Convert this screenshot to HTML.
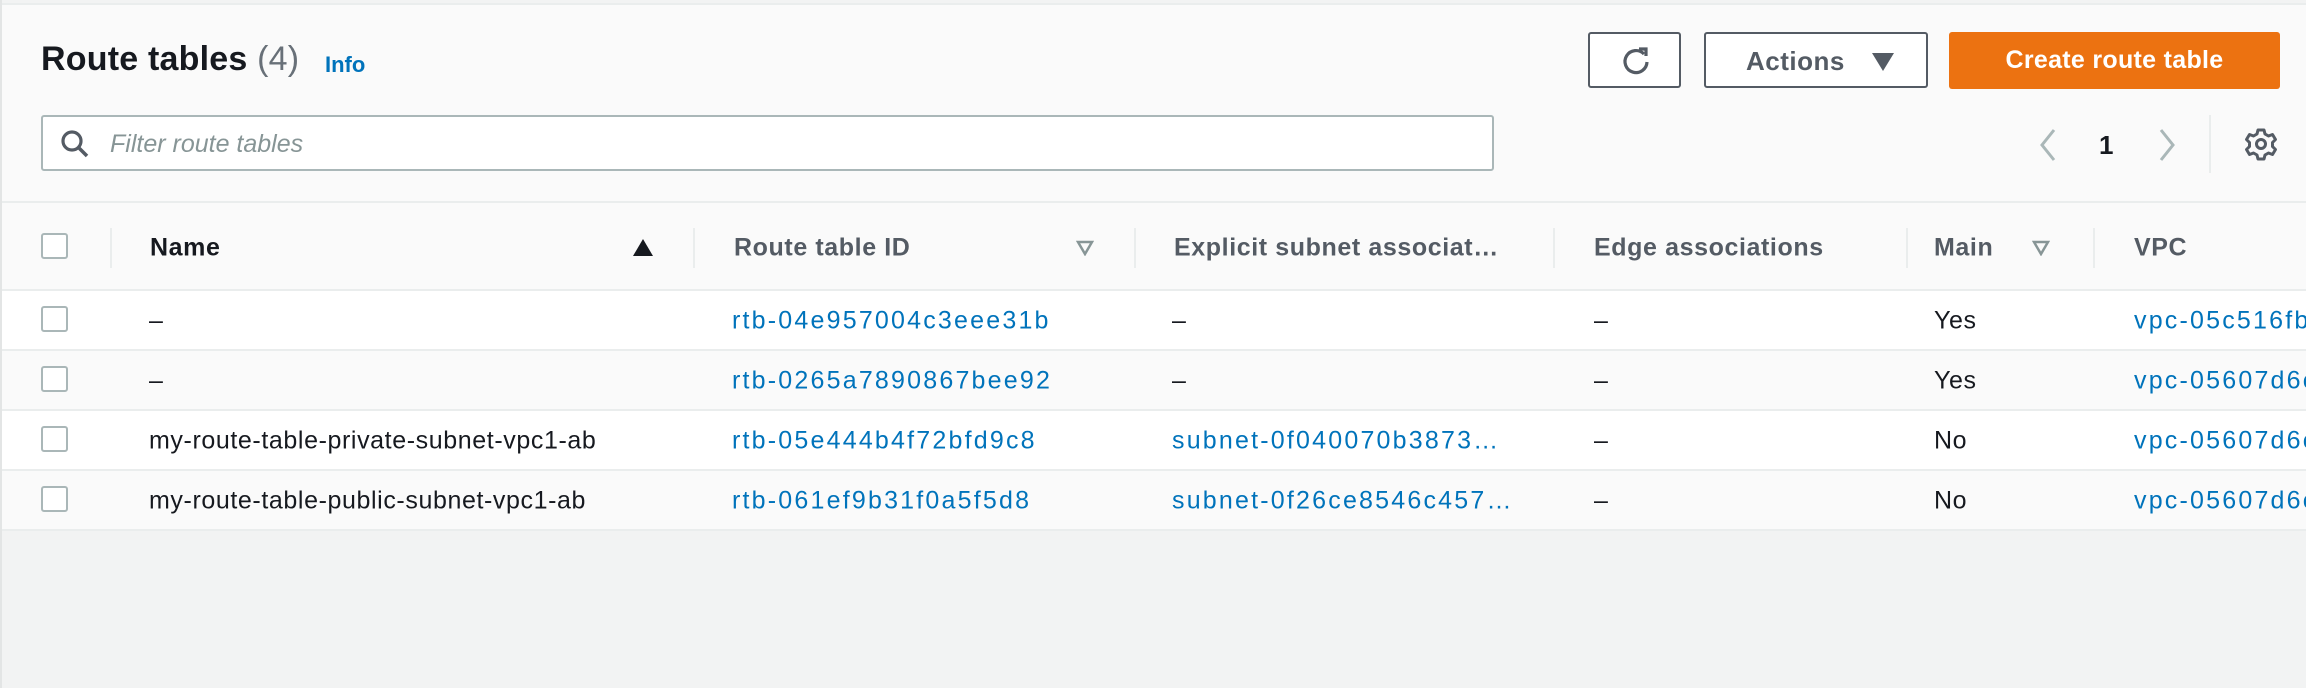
<!DOCTYPE html>
<html><head><meta charset="utf-8">
<style>
*{margin:0;padding:0;box-sizing:border-box}
html,body{width:2306px;height:688px;overflow:hidden}
body{background:#f2f3f3;font-family:"Liberation Sans",sans-serif;position:relative;color:#16191f}
.a{position:absolute;white-space:nowrap}
.panel{position:absolute;left:2px;top:3px;width:2304px;height:527px;background:#fafafa;border-top:2px solid #eaeded}
.lf{position:absolute;left:0;top:0;width:2px;height:688px;background:#e3e5e5}
.row{position:absolute;left:2px;width:2304px;border-bottom:2px solid #eaeded}
.cb{position:absolute;left:41px;width:27px;height:26px;border:2px solid #aab7b8;border-radius:3px;background:#fff}
.t{font-size:25px;letter-spacing:0.6px;transform:translateY(-50%)}
.t.l{letter-spacing:2.2px}
.h{font-size:25px;font-weight:bold;color:#545b64;letter-spacing:0.6px;transform:translateY(-50%)}
.l{color:#0073bb}
.sep{position:absolute;top:228px;width:2px;height:40px;background:#eaeded}
.btn{position:absolute;top:32px;height:56px;border:2px solid #545b64;border-radius:3px;background:#fff}
</style></head><body>
<div class="panel"></div>
<div class="lf"></div>

<div class="a" style="left:41px;top:40px;font-size:34px;font-weight:bold;letter-spacing:0.2px">Route tables <span style="font-weight:normal;color:#687078">(4)</span></div>
<div class="a l" style="left:325px;top:52px;font-size:22px;font-weight:bold">Info</div>

<div class="btn" style="left:1588px;width:93px"><svg style="position:absolute;left:30px;top:11px" width="32" height="32" viewBox="0 0 32 32"><path d="M24 9 A11 11 0 1 0 27 17" fill="none" stroke="#545b64" stroke-width="3.2"/><path d="M19 4 L26 4 L26 11" fill="none" stroke="#545b64" stroke-width="3.2"/></svg></div>
<div class="btn" style="left:1704px;width:224px"><span class="a" style="left:40px;top:12px;font-size:26px;font-weight:bold;color:#545b64;letter-spacing:0.5px">Actions</span><svg class="a" style="left:166px;top:19px" width="22" height="18"><path d="M0 0 L22 0 L11 18 Z" fill="#545b64"/></svg></div>
<div class="a" style="left:1949px;top:32px;width:331px;height:57px;background:#ec7211;border-radius:3px;color:#fff;font-size:25px;font-weight:bold;text-align:center;line-height:57px;letter-spacing:0.3px">Create route table</div>

<div class="a" style="left:41px;top:115px;width:1453px;height:56px;border:2px solid #aab7b8;border-radius:3px;background:#fff">
<svg class="a" style="left:17px;top:12px" width="30" height="30"><circle cx="12" cy="12" r="9" fill="none" stroke="#545b64" stroke-width="3.2"/><path d="M18 18 L27 27" stroke="#545b64" stroke-width="3.5"/></svg>
<span class="a" style="left:67px;top:13px;font-size:25px;font-style:italic;color:#879596">Filter route tables</span></div>

<svg class="a" style="left:2038px;top:128px" width="20" height="34"><path d="M16 2 L4 17 L16 32" fill="none" stroke="#aab7b8" stroke-width="3"/></svg>
<div class="a" style="left:2099px;top:130px;font-size:26px;font-weight:bold">1</div>
<svg class="a" style="left:2157px;top:128px" width="20" height="34"><path d="M4 2 L16 17 L4 32" fill="none" stroke="#aab7b8" stroke-width="3"/></svg>
<div class="a" style="left:2209px;top:115px;width:2px;height:58px;background:#eaeded"></div>
<svg class="a" style="left:2244px;top:127px" width="34" height="34" viewBox="0 0 34 34"><path d="M14 3 h6 l1 4 l3.5 2 l4-1.5 l3 5 l-3 3 v4 l3 3 l-3 5 l-4-1.5 l-3.5 2 l-1 4 h-6 l-1-4 l-3.5-2 l-4 1.5 l-3-5 l3-3 v-4 l-3-3 l3-5 l4 1.5 l3.5-2 Z" fill="none" stroke="#545b64" stroke-width="3" stroke-linejoin="round"/><circle cx="17" cy="17" r="4.5" fill="none" stroke="#545b64" stroke-width="3"/></svg>

<div class="row" style="top:201px;height:2px;background:#eaeded;border:none"></div>
<div class="cb" style="top:233px"></div>
<div class="sep" style="left:110px"></div><div class="sep" style="left:693px"></div><div class="sep" style="left:1134px"></div><div class="sep" style="left:1553px"></div><div class="sep" style="left:1906px"></div><div class="sep" style="left:2093px"></div>
<div class="a h" style="left:150px;top:248px;color:#16191f">Name</div>
<svg class="a" style="left:633px;top:239px" width="20" height="17"><path d="M10 0 L20 17 L0 17 Z" fill="#16191f"/></svg>
<div class="a h" style="left:734px;top:248px">Route table ID</div>
<svg class="a" style="left:1076px;top:240px" width="18" height="16"><path d="M2 2 L16 2 L9 14 Z" fill="none" stroke="#879596" stroke-width="2.5"/></svg>
<div class="a h" style="left:1174px;top:248px">Explicit subnet associat…</div>
<div class="a h" style="left:1594px;top:248px">Edge associations</div>
<div class="a h" style="left:1934px;top:248px">Main</div>
<svg class="a" style="left:2032px;top:240px" width="18" height="16"><path d="M2 2 L16 2 L9 14 Z" fill="none" stroke="#879596" stroke-width="2.5"/></svg>
<div class="a h" style="left:2134px;top:248px">VPC</div>

<div class="row" style="top:289px;height:2px;background:#eaeded;border:none"></div>
<div class="row" style="top:291px;height:60px;background:#fff"></div>
<div class="row" style="top:351px;height:60px;background:#fafafa"></div>
<div class="row" style="top:411px;height:60px;background:#fff"></div>
<div class="row" style="top:471px;height:60px;background:#fafafa"></div>

<div class="cb" style="top:306px"></div><div class="cb" style="top:366px"></div><div class="cb" style="top:426px"></div><div class="cb" style="top:486px"></div>

<div class="a t" style="left:149px;top:321px">–</div>
<div class="a t l" style="left:732px;top:321px">rtb-04e957004c3eee31b</div>
<div class="a t" style="left:1172px;top:321px">–</div>
<div class="a t" style="left:1594px;top:321px">–</div>
<div class="a t" style="left:1934px;top:321px">Yes</div>
<div class="a t l" style="left:2134px;top:321px">vpc-05c516fb</div>

<div class="a t" style="left:149px;top:381px">–</div>
<div class="a t l" style="left:732px;top:381px">rtb-0265a7890867bee92</div>
<div class="a t" style="left:1172px;top:381px">–</div>
<div class="a t" style="left:1594px;top:381px">–</div>
<div class="a t" style="left:1934px;top:381px">Yes</div>
<div class="a t l" style="left:2134px;top:381px">vpc-05607d6c</div>

<div class="a t" style="left:149px;top:441px">my-route-table-private-subnet-vpc1-ab</div>
<div class="a t l" style="left:732px;top:441px">rtb-05e444b4f72bfd9c8</div>
<div class="a t l" style="left:1172px;top:441px">subnet-0f040070b3873…</div>
<div class="a t" style="left:1594px;top:441px">–</div>
<div class="a t" style="left:1934px;top:441px">No</div>
<div class="a t l" style="left:2134px;top:441px">vpc-05607d6c</div>

<div class="a t" style="left:149px;top:501px">my-route-table-public-subnet-vpc1-ab</div>
<div class="a t l" style="left:732px;top:501px">rtb-061ef9b31f0a5f5d8</div>
<div class="a t l" style="left:1172px;top:501px">subnet-0f26ce8546c457…</div>
<div class="a t" style="left:1594px;top:501px">–</div>
<div class="a t" style="left:1934px;top:501px">No</div>
<div class="a t l" style="left:2134px;top:501px">vpc-05607d6c</div>
</body></html>
